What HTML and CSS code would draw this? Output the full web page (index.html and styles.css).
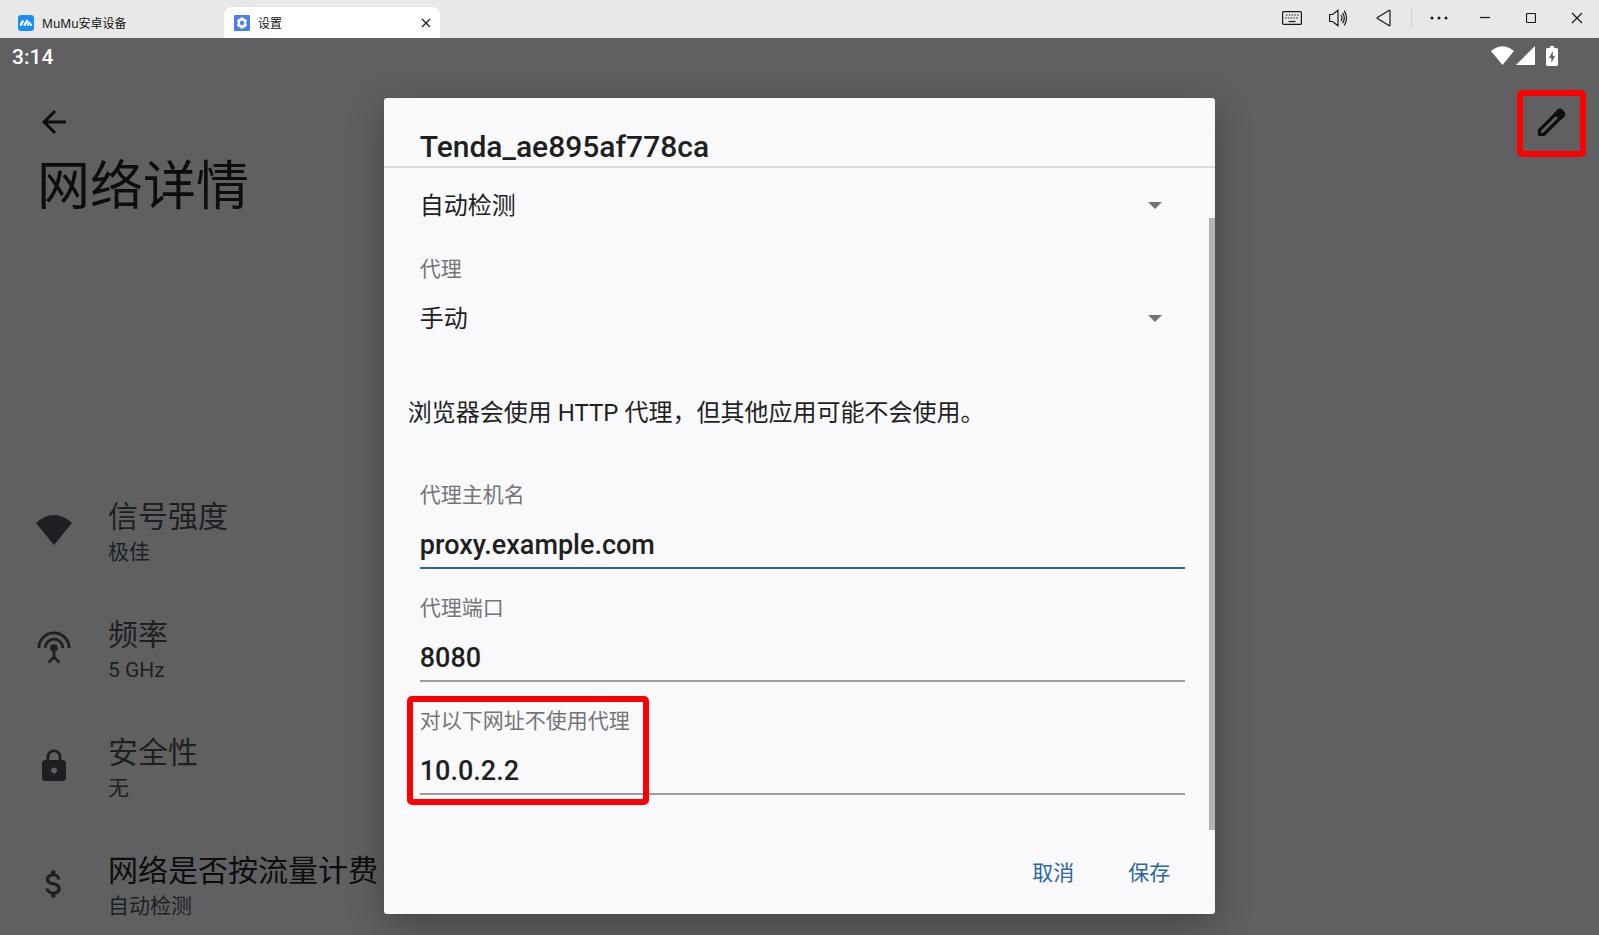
FILE: index.html
```html
<!DOCTYPE html>
<html lang="zh-CN">
<head>
  <meta charset="UTF-8">
  <meta name="viewport" content="width=device-width, initial-scale=1.0">
  <title>MuMu安卓设备</title>
  <link rel="stylesheet" href="styles.css">
</head>
<body>
  <header class="titlebar">
    <nav class="tabs">
      <a class="tab" href="#">
        <svg width="16" height="16" viewBox="0 0 16 16"><rect width="16" height="16" rx="3" fill="#1a8cff"/><path d="M2.800 9.800l1.900-3.400M6.600 9.800l2.400-4M10.200 9.600l1-2" stroke="#fff" stroke-width="2.400" stroke-linecap="round"/><circle cx="13" cy="9.700" r="1.200" fill="#fff"/></svg>
        <span>MuMu安卓设备</span>
      </a>
      <div class="tab active">
        <svg width="16" height="16" viewBox="0 0 16 16"><rect width="16" height="16" rx="1" fill="#4a7ff0"/><path d="M6.600 2.500h2.800l.5 1.500 1.600-.3 1.500 2.400L12 8l1 1.900-1.500 2.400-1.600-.3-.5 1.500H6.600L6.100 12l-1.600.3L3 9.900 4 8 3 6.100l1.500-2.400 1.600.3z" fill="#fff"/><circle cx="8" cy="8" r="2.200" fill="#4a7ff0"/></svg>
        <span>设置</span>
        <button class="tab-close" aria-label="关闭标签">
          <svg width="10" height="10" viewBox="0 0 10 10"><path d="M1 1l8 8M9 1L1 9"/></svg>
        </button>
      </div>
    </nav>
    <div class="window-tools">
      <button aria-label="键盘"><svg width="20" height="14" viewBox="0 0 20 14"><rect x=".6" y=".6" width="18.8" height="12.8" rx="1"/><path d="M4 4h13" stroke-dasharray="1.5 1.3"/><path d="M3 7h14" stroke-dasharray="1.5 1.3"/><path d="M6.5 10.5h7"/></svg></button>
      <button aria-label="音量"><svg width="20" height="18" viewBox="0 0 20 18"><path d="M1.6 5.5h3L10 1.2v15.6l-5.4-4.3h-3zM13 6q2 3 0 6M14.6 3.8q3.4 5.2 0 10.4M16.2 1.6q4.6 7.4 0 14.8"/></svg></button>
      <button aria-label="返回"><svg width="16" height="18" viewBox="0 0 16 18"><path d="M14 1.8v14.4q0 1-1 .4L1.4 9.5q-.8-.5 0-1L13 1.4q1-.6 1 .4z"/></svg></button>
      <span class="divider"></span>
      <button aria-label="更多"><svg width="18" height="4" viewBox="0 0 18 4"><g class="solid"><circle cx="2" cy="2" r="1.5"/><circle cx="9" cy="2" r="1.5"/><circle cx="16" cy="2" r="1.5"/></g></svg></button>
      <button aria-label="最小化"><svg width="10" height="10" viewBox="0 0 10 10"><path d="M0 4.5h10"/></svg></button>
      <button aria-label="最大化"><svg width="10" height="10" viewBox="0 0 10 10"><rect x=".5" y=".5" width="9" height="9" rx="1"/></svg></button>
      <button aria-label="关闭"><svg width="12" height="12" viewBox="0 0 12 12"><path d="M1 1l10 10M11 1L1 11"/></svg></button>
    </div>
  </header>

  <div class="screen">
    <div class="statusbar">
      <span>3:14</span>
      <div class="status-icons">
        <svg width="23" height="19" viewBox="0 0 23 19"><path d="M11.500 19L23 5Q11.500-4.500 0 5z"/></svg>
        <svg width="19" height="19" viewBox="0 0 19 19"><path d="M19 0v19H0z"/></svg>
        <svg class="battery" width="12" height="20" viewBox="0 0 12 20"><path d="M4 0h4v2h3l1 1v16l-1 1H1l-1-1V3l1-1h3z"/><path d="M6.800 5L3 12h2.400v5L9 10H6.800z" fill="#606062"/></svg>
      </div>
    </div>

    <main class="details">
      <div class="toolbar">
        <button class="back" aria-label="向上导航"><svg width="36" height="36" viewBox="0 0 24 24"><path d="M20 11H7.830l5.590-5.590L12 4l-8 8 8 8 1.410-1.410L7.830 13H20z"/></svg></button>
        <button class="edit" aria-label="修改"><svg width="36" height="36" viewBox="0 0 36 36"><path d="M5.500 26.200L21.800 9.900l4.300 4.300L9.800 30.500H5.500z" fill="none" stroke="#0d0d0d" stroke-width="3.200" stroke-linejoin="round"/><path d="M20 8.900l3.700-3.600q2.200-1.800 4.300 0l2.700 2.700q1.800 2.200 0 4.300L27.100 16z"/></svg></button>
      </div>
      <h1>网络详情</h1>
      <ul class="info-list">
        <li>
          <svg width="36" height="36" viewBox="0 0 36 36"><path d="M18 33L36 11Q18-5 0 11z"/></svg>
          <div><h3>信号强度</h3><p>极佳</p></div>
        </li>
        <li>
          <svg width="36" height="36" viewBox="0 0 36 36"><g fill="none" stroke="#1d1f22" stroke-width="2.800"><path d="M2.900 18a15.100 15.100 0 0 1 30.200 0M9.200 18a8.800 8.800 0 0 1 17.600 0M18 18v9.500M12.600 32.500L18 27l5.400 5.500"/></g><circle cx="18" cy="18" r="3.800"/></svg>
          <div><h3>频率</h3><p>5 GHz</p></div>
        </li>
        <li>
          <svg width="36" height="36" viewBox="0 0 24 24"><path d="M18 8h-1V6c0-2.760-2.240-5-5-5S7 3.240 7 6v2H6c-1.100 0-2 .9-2 2v10c0 1.100.9 2 2 2h12c1.100 0 2-.9 2-2V10c0-1.100-.9-2-2-2zm-6 9c-1.100 0-2-.9-2-2s.9-2 2-2 2 .9 2 2-.9 2-2 2zm3.100-9H8.900V6c0-1.710 1.390-3.100 3.100-3.100s3.100 1.390 3.100 3.100z"/></svg>
          <div><h3>安全性</h3><p>无</p></div>
        </li>
        <li class="enabled">
          <svg width="36" height="36" viewBox="0 0 24 24"><path d="M11.800 10.900c-2.270-.59-3-1.200-3-2.150 0-1.090 1.010-1.850 2.700-1.850 1.780 0 2.440.85 2.500 2.100h2.210c-.07-1.720-1.120-3.300-3.210-3.810V3h-3v2.160c-1.940.42-3.500 1.680-3.500 3.610 0 2.310 1.910 3.460 4.700 4.130 2.500.6 3 1.480 3 2.410 0 .69-.49 1.790-2.700 1.790-2.060 0-2.870-.92-2.980-2.100h-2.200c.12 2.190 1.760 3.420 3.680 3.830V21h3v-2.150c1.950-.37 3.500-1.500 3.500-3.550 0-2.840-2.430-3.810-4.700-4.400z"/></svg>
          <div><h3>网络是否按流量计费</h3><p>自动检测</p></div>
        </li>
      </ul>
    </main>

    <div class="overlay">
      <form class="dialog" role="dialog" aria-labelledby="ssid">
        <h2 id="ssid">Tenda_ae895af778ca</h2>
        <div class="dialog-body">
          <div class="select-wrap">
            <select id="metered" aria-label="网络是否按流量计费"><option>自动检测</option></select>
            <svg width="14" height="7" viewBox="0 0 14 7"><path d="M0 0h14L7 7z"/></svg>
          </div>
          <div class="field">
            <label for="proxy">代理</label>
            <div class="select-wrap">
              <select id="proxy"><option>手动</option></select>
              <svg width="14" height="7" viewBox="0 0 14 7"><path d="M0 0h14L7 7z"/></svg>
            </div>
          </div>
          <p class="message">浏览器会使用 HTTP 代理，但其他应用可能不会使用。</p>
          <div class="field focused">
            <label for="host">代理主机名</label>
            <input type="text" id="host" value="proxy.example.com">
          </div>
          <div class="field">
            <label for="port">代理端口</label>
            <input type="text" id="port" value="8080">
          </div>
          <div class="field marked">
            <label for="bypass">对以下网址不使用代理</label>
            <input type="text" id="bypass" value="10.0.2.2">
          </div>
          <span class="scrollbar"></span>
        </div>
        <div class="actions">
          <button type="button">取消</button>
          <button type="button">保存</button>
        </div>
      </form>
    </div>
  </div>
</body>
</html>
```

FILE: styles.css
```css
*, *::after { box-sizing: border-box; }
body { margin: 0; min-height: 100vh; display: flex; flex-direction: column; font-family: Roboto, "Noto Sans CJK SC", sans-serif; background: #606062; overflow: hidden; }
h1, h2, h3, p, ul { margin: 0; padding: 0; font-weight: 400; }
button { background: none; border: none; padding: 0; font-family: inherit; cursor: pointer; }
svg { display: block; flex: none; }

/* window title bar */
.titlebar { display: flex; justify-content: space-between; height: 38px; background: #e8e8e8; }
.tabs { display: flex; align-items: flex-end; }
.tab { display: flex; align-items: center; gap: 8px; width: 216px; height: 31px; padding: 0 9px 0 10px; color: #111; font-size: 12px; text-decoration: none; font-family: "Noto Sans", "Noto Sans CJK SC", sans-serif; }
.tab:first-child { width: 224px; padding-left: 18px; }
.tab.active { background: #fff; border-radius: 8px 8px 0 0; }
.tab-close { margin-left: auto; }
.tab-close svg, .window-tools svg { fill: none; stroke: #1a1a1a; stroke-width: 1.2; }
.window-tools { display: flex; align-items: center; height: 36px; margin-right: -1px; }
.window-tools button { display: flex; align-items: center; justify-content: center; width: 46px; height: 36px; }
.window-tools .solid { fill: #1a1a1a; stroke: none; }
.divider { width: 1px; height: 20px; margin: 0 4px; background: #cfcfcf; }

/* android screen */
.screen { position: relative; flex: 1; }
.statusbar { display: flex; justify-content: space-between; align-items: center; height: 37px; padding: 0 41px 0 12px; color: #fff; font-size: 21px; font-weight: 500; }
.status-icons { display: flex; gap: 2px; margin-bottom: 2px; fill: #fff; }
.battery { margin-left: 9px; }
.toolbar { display: flex; justify-content: space-between; align-items: center; padding: 15px 13px 0 36px; fill: #0d0d0d; }
.toolbar svg { margin-bottom: 3px; }
.edit { display: flex; align-items: center; justify-content: center; width: 69px; height: 67px; border: 6px solid #f00; border-radius: 5px; }
h1 { padding: 0 37px; font-size: 53px; line-height: 60px; color: #0d0d0d; }
.info-list { display: flex; flex-direction: column; gap: 46px; margin-top: 277px; padding: 0 36px; list-style: none; color: #1d1f22; fill: #1d1f22; }
.info-list li { display: flex; align-items: center; gap: 36px; }
.info-list h3 { padding-top: 2px; font-size: 30px; line-height: 42px; }
.info-list p { font-size: 21px; line-height: 28px; }
.info-list .enabled h3 { color: #0d0d0d; }

/* proxy dialog */
.overlay { position: absolute; inset: 0; display: flex; justify-content: center; align-items: flex-start; padding-top: 60px; }
.dialog { width: 52%; background: #f9f9fc; border-radius: 3px; box-shadow: 0 10px 36px rgba(0,0,0,0.3); color: #1f1f1f; }
.dialog h2 { padding: 31px 36px 1px; font-size: 30px; line-height: 36px; font-weight: 500; border-bottom: 2px solid #dadbdd; }
.dialog-body { position: relative; padding: 13px 30px 35px 36px; }
.field { position: relative; margin-top: 24px; }
.field label { display: block; margin-bottom: 10px; font-size: 21px; line-height: 30px; color: #757577; }
.select-wrap { display: grid; align-items: center; }
.select-wrap > * { grid-area: 1 / 1; }
.select-wrap select { width: 100%; height: 49px; padding: 1px 0 0; border: none; background: none; appearance: none; color: inherit; font-family: inherit; font-size: 24px; }
.select-wrap svg { justify-self: end; margin-right: 23px; fill: #717173; pointer-events: none; }
.message { margin: 55px 0 52px -12px; font-size: 24px; line-height: 30px; }
.message + .field { margin-top: 0; }
.field input { display: block; width: 100%; height: 49px; padding: 2px 0 0; border: none; border-bottom: 2px solid #9d9da0; border-radius: 0; background: none; outline: none; color: inherit; font-family: inherit; font-size: 27px; font-weight: 500; }
.field.focused input { border-color: #2a66a2; }
.marked::after { content: ""; position: absolute; top: -10px; left: -13px; width: 242px; bottom: -10px; border: 6px solid #f00; border-radius: 5px; pointer-events: none; }
.scrollbar { position: absolute; top: 50px; right: 0; bottom: 0; width: 6px; background: #b2b2b5; }
.actions { display: flex; justify-content: flex-end; gap: 54px; padding: 22px 45px 20px; }
.actions button { font-size: 21px; line-height: 42px; color: #2a66a2; }
```
